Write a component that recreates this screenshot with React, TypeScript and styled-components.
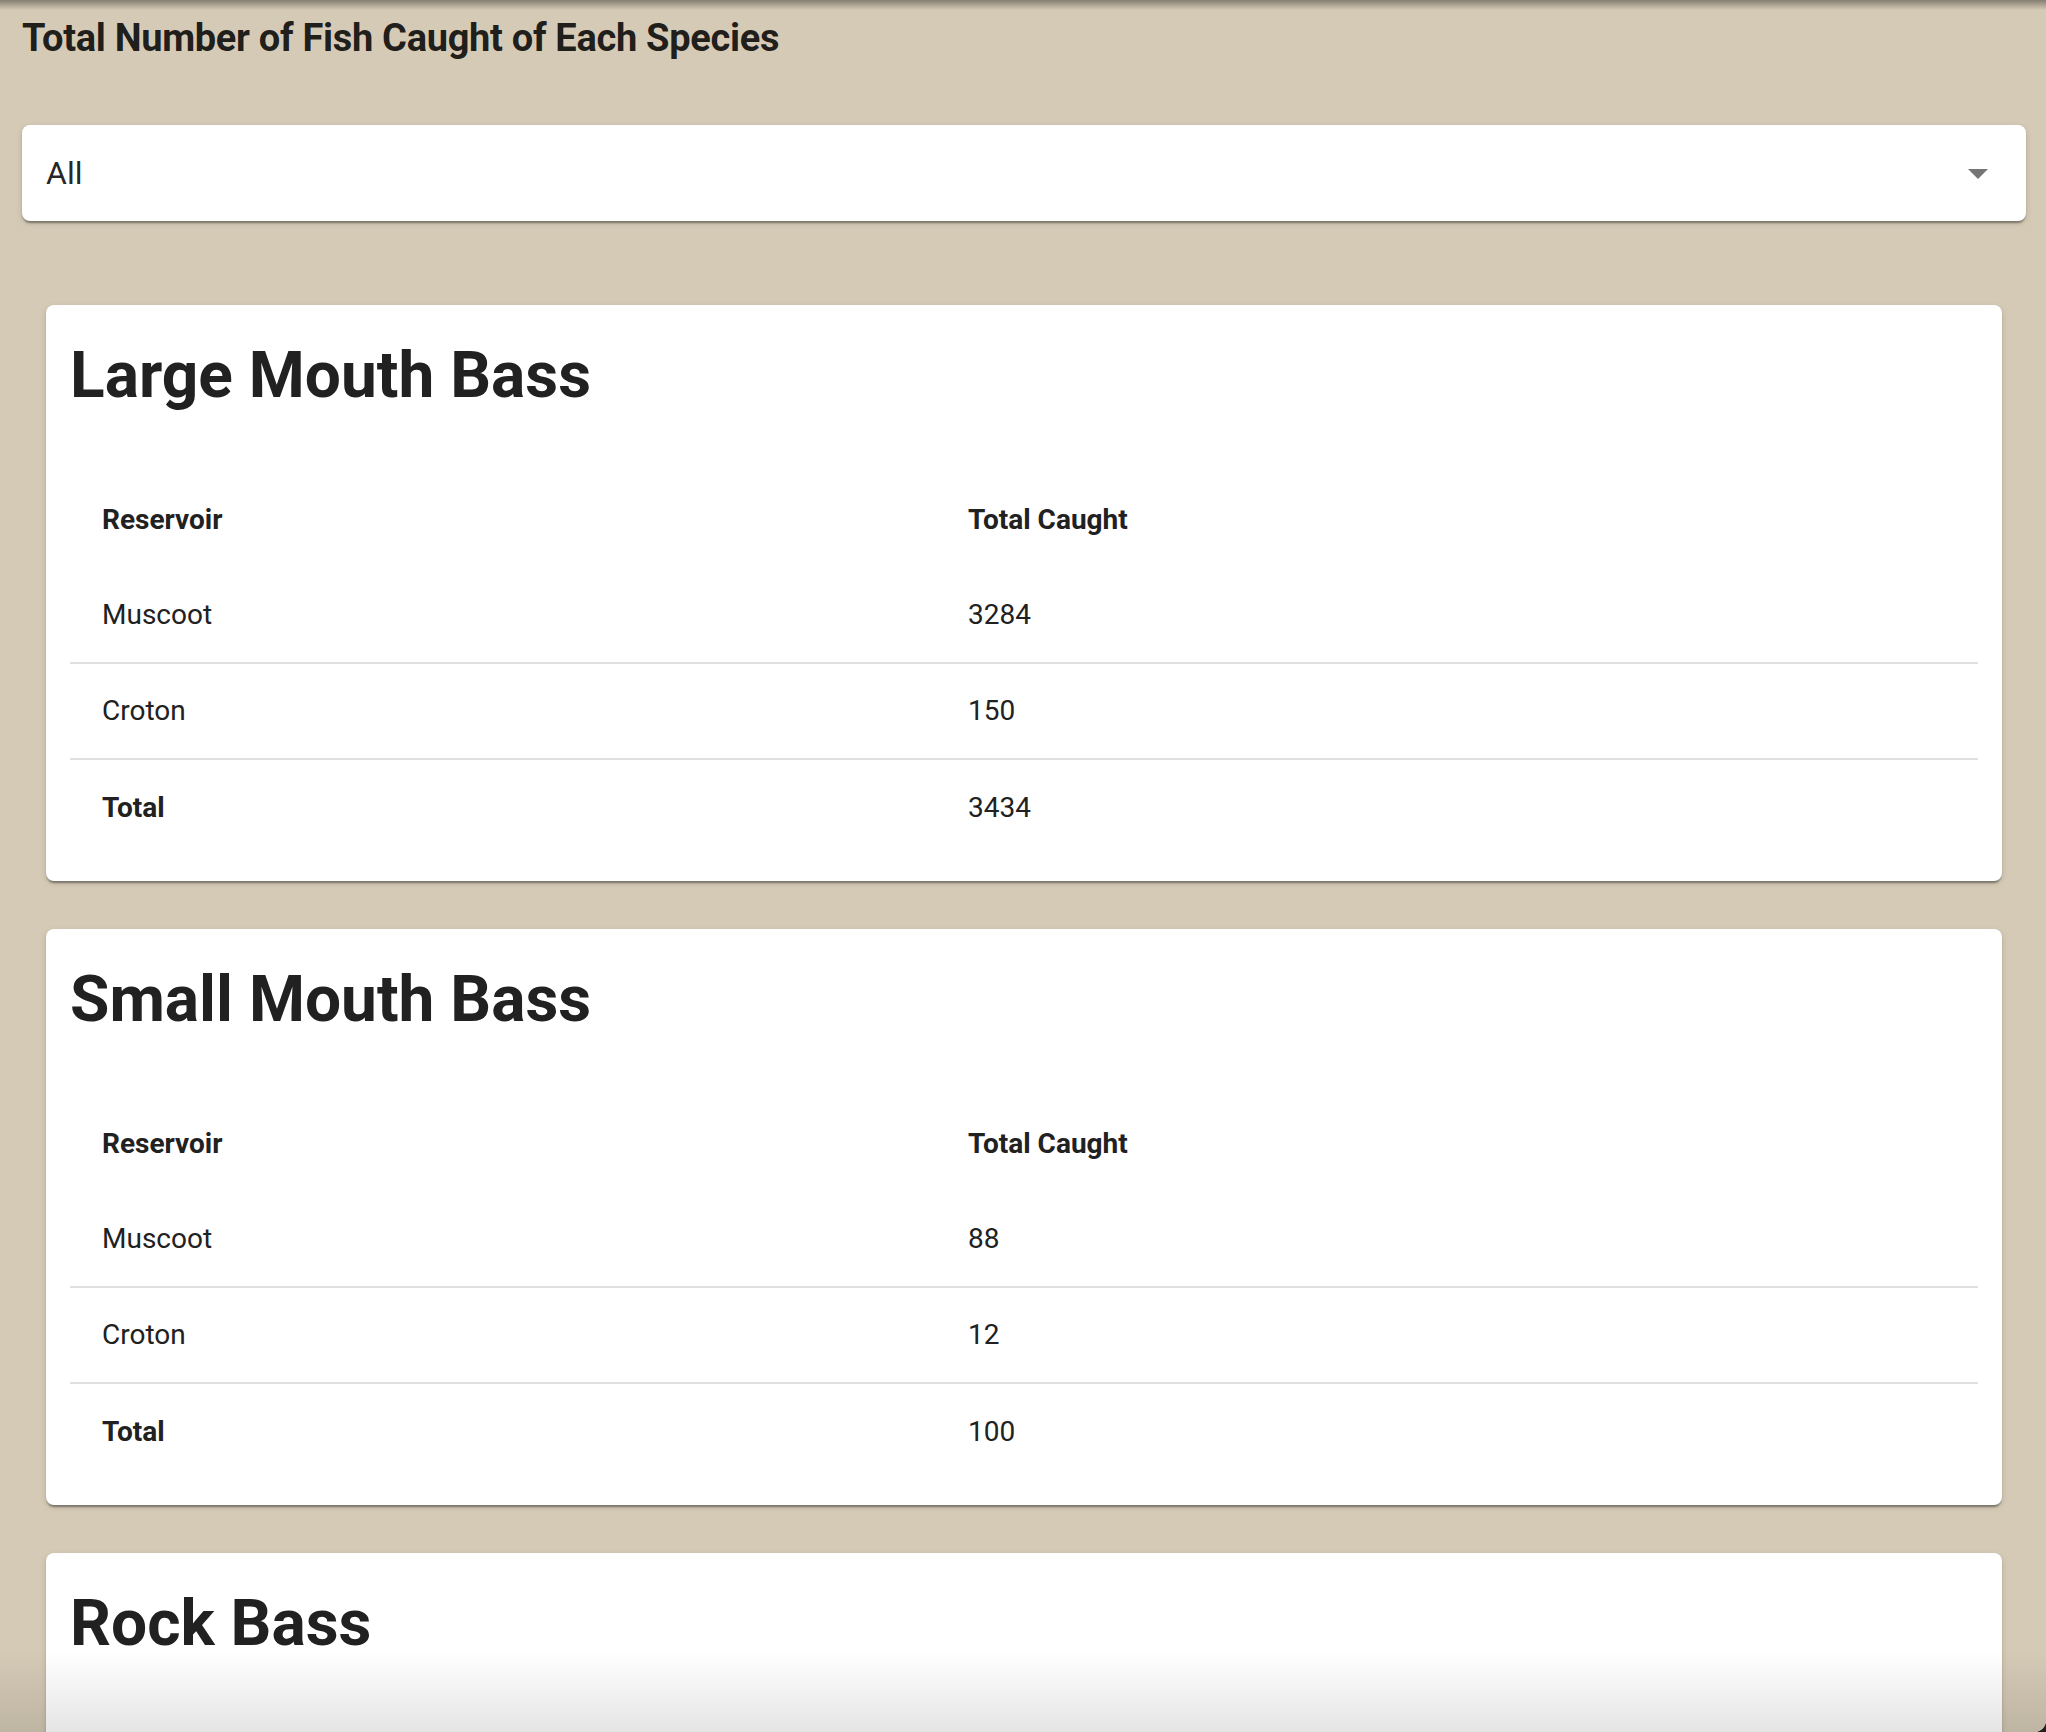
import React from 'react';
import styled, { createGlobalStyle } from 'styled-components';

type Catch = { reservoir: string; total: number };
type Species = { name: string; catches: Catch[] };

// Rock Bass rows sit below the fold in the screenshot, so only its heading is known
const species: Species[] = [
	{
		name: 'Large Mouth Bass',
		catches: [
			{ reservoir: 'Muscoot', total: 3284 },
			{ reservoir: 'Croton', total: 150 },
		],
	},
	{
		name: 'Small Mouth Bass',
		catches: [
			{ reservoir: 'Muscoot', total: 88 },
			{ reservoir: 'Croton', total: 12 },
		],
	},
	{
		name: 'Rock Bass',
		catches: [],
	},
];

const GlobalStyle = createGlobalStyle`
	html, body {
		margin: 0;
		padding: 0;
		overflow: hidden;
		background: #d5cab6;
		font-family: Roboto, 'Liberation Sans', sans-serif;
		color: rgba(0, 0, 0, 0.87);
	}
`;

const Page = styled.main`
	padding: 14px 20px 0 22px;
	height: 1732px;
	box-sizing: border-box;
`;

const PageTitle = styled.h1`
	margin: 0;
	font-size: 38px;
	line-height: 48px;
	font-weight: 700;
	letter-spacing: -0.3px;
	color: rgba(0, 0, 0, 0.87);
`;

const SelectBox = styled.div`
	margin-top: 63px;
	height: 96px;
	background: #fff;
	border-radius: 8px;
	box-shadow: 0 4px 2px -2px rgba(0, 0, 0, 0.25), 0 2px 2px 0 rgba(0, 0, 0, 0.16), 0 2px 6px 0 rgba(0, 0, 0, 0.12);
	display: flex;
	align-items: center;
	justify-content: space-between;
	padding: 0 24px;
	box-sizing: border-box;
`;

const SelectValue = styled.span`
	font-size: 32px;
	line-height: 1.4375;
	color: rgba(0, 0, 0, 0.87);
`;

const CardList = styled.div`
	display: flex;
	flex-direction: column;
	gap: 48px;
	padding: 84px 24px 0;
`;

const Card = styled.section`
	min-height: 576px;
	box-sizing: border-box;
	background: #fff;
	border-radius: 8px;
	box-shadow: 0 4px 2px -2px rgba(0, 0, 0, 0.25), 0 2px 2px 0 rgba(0, 0, 0, 0.16), 0 2px 6px 0 rgba(0, 0, 0, 0.12);
	padding: 32px 24px 25px;
`;

const CardTitle = styled.h2`
	margin: 0 0 58px;
	font-size: 64px;
	line-height: 77px;
	font-weight: 700;
	color: #212121;
`;

const Row = styled.div<{ $divider?: boolean }>`
	display: grid;
	grid-template-columns: 866px 1fr;
	height: 96px;
	box-sizing: border-box;
	border-bottom: ${(p) => (p.$divider ? '2px solid #e0e0e0' : 'none')};
`;

const Cell = styled.div<{ $bold?: boolean }>`
	display: flex;
	align-items: center;
	padding: 0 32px;
	font-size: 28px;
	line-height: 40px;
	font-weight: ${(p) => (p.$bold ? 700 : 400)};
	color: #212121;
`;

const TopShade = styled.div`
	position: fixed;
	top: 0;
	left: 0;
	right: 0;
	height: 10px;
	background: linear-gradient(rgba(0, 0, 0, 0.38), rgba(0, 0, 0, 0));
	pointer-events: none;
`;

const BottomShade = styled.div`
	position: fixed;
	bottom: 0;
	left: 0;
	right: 0;
	height: 80px;
	background: linear-gradient(rgba(0, 0, 0, 0), rgba(0, 0, 0, 0.1));
	pointer-events: none;
`;

const Corner = styled.div`
	position: fixed;
	right: 0;
	bottom: 0;
	width: 12px;
	height: 12px;
	background: radial-gradient(circle at top left, transparent 12px, #231f1c 12.5px);
	pointer-events: none;
`;

const ArrowDropDown = () => (
	<svg width='48' height='48' viewBox='0 0 24 24' fill='rgba(0,0,0,0.54)'>
		<path d='M7 10l5 5 5-5z' />
	</svg>
);

const SpeciesCard = ({ item }: { item: Species }) => {
	const sum = item.catches.reduce((acc, c) => acc + c.total, 0);
	return (
		<Card>
			<CardTitle>{item.name}</CardTitle>
			{item.catches.length > 0 && (
				<>
					<Row>
						<Cell $bold>Reservoir</Cell>
						<Cell $bold>Total Caught</Cell>
					</Row>
					{item.catches.map((c) => (
						<Row key={c.reservoir} $divider>
							<Cell>{c.reservoir}</Cell>
							<Cell>{c.total}</Cell>
						</Row>
					))}
					<Row>
						<Cell $bold>Total</Cell>
						<Cell>{sum}</Cell>
					</Row>
				</>
			)}
		</Card>
	);
};

const App = () => {
	return (
		<>
			<GlobalStyle />
			<Page>
				<PageTitle>Total Number of Fish Caught of Each Species</PageTitle>
				<SelectBox>
					<SelectValue>All</SelectValue>
					<ArrowDropDown />
				</SelectBox>
				<CardList>
					{species.map((s) => (
						<SpeciesCard key={s.name} item={s} />
					))}
				</CardList>
			</Page>
			<TopShade />
			<BottomShade />
			<Corner />
		</>
	);
};

export default App;
